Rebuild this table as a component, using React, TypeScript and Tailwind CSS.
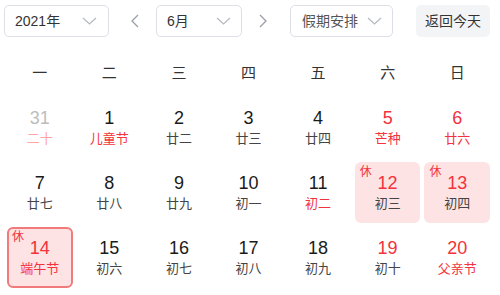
import React from 'react';

type Day = {
  n: number;
  lunar: string;
  other?: boolean;
  redNum?: boolean;
  redLunar?: boolean;
  rest?: boolean;
  selected?: boolean;
};

const weekdays = ['一', '二', '三', '四', '五', '六', '日'];

const weeks: Day[][] = [
  [
    { n: 31, lunar: '二十', other: true },
    { n: 1, lunar: '儿童节', redLunar: true },
    { n: 2, lunar: '廿二' },
    { n: 3, lunar: '廿三' },
    { n: 4, lunar: '廿四' },
    { n: 5, lunar: '芒种', redNum: true, redLunar: true },
    { n: 6, lunar: '廿六', redNum: true, redLunar: true },
  ],
  [
    { n: 7, lunar: '廿七' },
    { n: 8, lunar: '廿八' },
    { n: 9, lunar: '廿九' },
    { n: 10, lunar: '初一' },
    { n: 11, lunar: '初二', redLunar: true },
    { n: 12, lunar: '初三', redNum: true, rest: true },
    { n: 13, lunar: '初四', redNum: true, rest: true },
  ],
  [
    { n: 14, lunar: '端午节', redNum: true, redLunar: true, rest: true, selected: true },
    { n: 15, lunar: '初六' },
    { n: 16, lunar: '初七' },
    { n: 17, lunar: '初八' },
    { n: 18, lunar: '初九' },
    { n: 19, lunar: '初十', redNum: true },
    { n: 20, lunar: '父亲节', redNum: true, redLunar: true },
  ],
];

const Chevron = () => (
  <svg width="15" height="8" viewBox="0 0 15 8" fill="none" stroke="#b4b8bf" strokeWidth="1.2">
    <path d="M1 1l6.5 6 6.5-6" />
  </svg>
);

const Arrow = ({ dir }: { dir: 'left' | 'right' }) => (
  <svg width="8" height="14" viewBox="0 0 8 14" fill="none" stroke="#9a9ea6" strokeWidth="1.3">
    {dir === 'left' ? <path d="M7 1L1 7l6 6" /> : <path d="M1 1l6 6-6 6" />}
  </svg>
);

const DayCell = ({ d }: { d: Day }) => {
  const numColor = d.other ? 'text-[#bdbdbd]' : d.redNum ? 'text-[#f2323c]' : 'text-[#1a1a1a]';
  const lunarColor = d.other
    ? 'text-[#ffa3a3]'
    : d.redLunar
    ? 'text-[#f2323c]'
    : 'text-[#444]';
  const box = d.selected
    ? 'bg-[#fde3e3] border-2 border-[#f17b7b]'
    : d.rest
    ? 'bg-[#fde3e3] border-2 border-transparent'
    : 'border-2 border-transparent';
  return (
    <div className="h-[65px] px-[2px] py-[2px]">
      <div className={`relative h-full rounded-[6px] flex flex-col items-center ${box}`}>
        {d.rest && (
          <span className="absolute left-[3px] top-[2px] text-[12px] leading-none text-[#f2323c]">休</span>
        )}
        <span className={`mt-[7px] text-[18px] leading-[24px] ${numColor}`}>{d.n}</span>
        <span className={`mt-[1px] text-[13px] leading-[16px] ${lunarColor}`}>{d.lunar}</span>
      </div>
    </div>
  );
};

export default function App() {
  return (
    <div
      className="w-[500px] h-[295px] bg-white overflow-hidden"
      style={{ fontFamily: '"Liberation Sans", "Noto Sans CJK SC", sans-serif' }}
    >
      <div className="flex items-center pl-[4px] pt-[5px] h-[37px]">
        <div className="w-[105px] h-[32px] border border-[#dcdfe6] rounded-[5px] flex items-center justify-between pl-[10px] pr-[11px]">
          <span className="text-[14px] text-[#333]">2021年</span>
          <Chevron />
        </div>
        <div className="ml-[22px]">
          <Arrow dir="left" />
        </div>
        <div className="ml-[17px] w-[86px] h-[32px] border border-[#dcdfe6] rounded-[5px] flex items-center justify-between pl-[10px] pr-[10px]">
          <span className="text-[14px] text-[#333]">6月</span>
          <Chevron />
        </div>
        <div className="ml-[17px]">
          <Arrow dir="right" />
        </div>
        <div className="ml-[23px] w-[103px] h-[32px] border border-[#dcdfe6] rounded-[5px] flex items-center pl-[11px] pr-[10px] gap-[9px]">
          <span className="text-[14px] text-[#555]">假期安排</span>
          <Chevron />
        </div>
        <button className="ml-[23px] w-[74px] h-[32px] rounded-[5px] bg-[#f3f4f6] text-[14px] text-[#333]">
          返回今天
        </button>
      </div>

      <div className="pl-[5px] w-[492px]">
        <div className="grid grid-cols-7 mt-[14px] h-[44px] items-center">
          {weekdays.map((w) => (
            <div key={w} className="text-center text-[15px] text-[#333]">
              {w}
            </div>
          ))}
        </div>
        {weeks.map((week, i) => (
          <div key={i} className="grid grid-cols-7">
            {week.map((d) => (
              <DayCell key={`${i}-${d.n}`} d={d} />
            ))}
          </div>
        ))}
      </div>
    </div>
  );
}
